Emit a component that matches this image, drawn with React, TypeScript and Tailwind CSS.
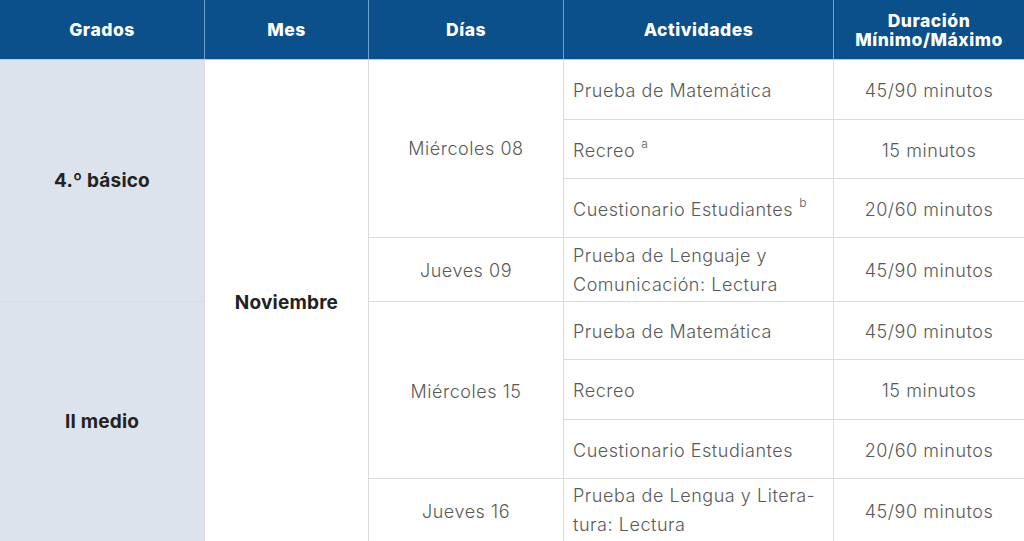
const headCell = "flex items-center justify-center text-center bg-[#0b4f8b] text-white font-extrabold text-[17.5px] leading-[19px] tracking-[0.03em]";
const cell = "flex items-center bg-white text-[#595959] text-[18px] font-light tracking-[0.03em]";
const grado = "flex items-center justify-center bg-[#dde3ec] text-[#222] font-bold text-[19px] tracking-[0.01em]";

const App = () => {
    return (
        <main className="w-[1024px] h-[541px] overflow-hidden bg-white font-['Inter',_'Liberation_Sans',_sans-serif]">
            {/* Header */}
            <div className="grid grid-cols-[204px_163px_194px_269px_1fr] h-[60px] gap-x-px bg-[#6c9fd2] border-b border-[#b4cde4]">
                <div className={headCell}>Grados</div>
                <div className={headCell}>Mes</div>
                <div className={headCell}>Días</div>
                <div className={headCell}>Actividades</div>
                <div className={headCell}>
                    <span>
                        Duración
                        <br />
                        Mínimo/Máximo
                    </span>
                </div>
            </div>

            {/* Body */}
            <div className="grid grid-cols-[204px_163px_194px_269px_1fr] grid-rows-[59px_58px_58px_63px_57px_59px_58px_62px] gap-px bg-[#dcdcdc]">
                <div className={`${grado} row-span-4 pt-[2px]`}>4.º básico</div>
                <div className="row-span-8 flex items-center justify-center pt-[5px] bg-white text-[#222] font-bold text-[19px] tracking-[0.01em]">
                    Noviembre
                </div>
                <div className={`${cell} row-span-3 justify-center`}>Miércoles 08</div>
                <div className={`${cell} pl-[9px] pt-[2px]`}>Prueba de Matemática</div>
                <div className={`${cell} justify-center pt-[2px]`}>45/90 minutos</div>

                <div className={`${cell} pl-[9px] pt-[2px]`}>
                    Recreo<sup className="ml-[6px] text-[12px] -top-[6px]">a</sup>
                </div>
                <div className={`${cell} justify-center pt-[2px]`}>15 minutos</div>

                <div className={`${cell} pl-[9px] pt-[2px]`}>
                    Cuestionario Estudiantes<sup className="ml-[6px] text-[12px] -top-[6px]">b</sup>
                </div>
                <div className={`${cell} justify-center pt-[2px]`}>20/60 minutos</div>

                <div className={`${cell} justify-center pt-[2px]`}>Jueves 09</div>
                <div className={`${cell} pl-[9px] leading-[29px]`}>
                    Prueba de Lenguaje y
                    <br />
                    Comunicación: Lectura
                </div>
                <div className={`${cell} justify-center pt-[2px]`}>45/90 minutos</div>

                <div className={`${grado} row-span-4 pt-[2px]`}>II medio</div>
                <div className={`${cell} row-span-3 justify-center pt-[2px]`}>Miércoles 15</div>
                <div className={`${cell} pl-[9px] pt-[2px]`}>Prueba de Matemática</div>
                <div className={`${cell} justify-center pt-[2px]`}>45/90 minutos</div>

                <div className={`${cell} pl-[9px] pt-[2px]`}>Recreo</div>
                <div className={`${cell} justify-center pt-[2px]`}>15 minutos</div>

                <div className={`${cell} pl-[9px] pt-[2px]`}>Cuestionario Estudiantes</div>
                <div className={`${cell} justify-center pt-[2px]`}>20/60 minutos</div>

                <div className={`${cell} justify-center pt-[2px]`}>Jueves 16</div>
                <div className={`${cell} pl-[9px] leading-[29px]`}>
                    Prueba de Lengua y Litera-
                    <br />
                    tura: Lectura
                </div>
                <div className={`${cell} justify-center pt-[2px]`}>45/90 minutos</div>
            </div>
        </main>
    );
};

export default App;
